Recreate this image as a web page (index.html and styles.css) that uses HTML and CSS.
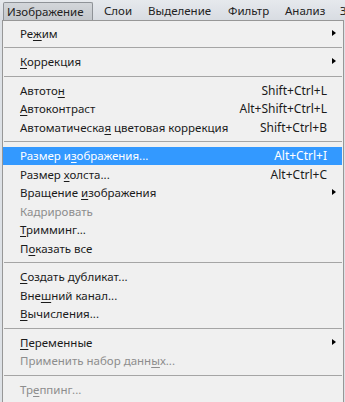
FILE: index.html
```html
<!DOCTYPE html>
<html lang="ru">
<head>
<meta charset="utf-8">
<link rel="stylesheet" href="styles.css">
</head>
<body>
<div class="menubar">
  <div class="top active">Изображение</div>
  <div class="top w-layers">Слои</div>
  <div class="top w-select">Выделение</div>
  <div class="top w-filter">Фильтр</div>
  <div class="top w-analysis">Анализ</div>
  <div class="top">З</div>
</div>
<div class="dropdown">
  <div class="item"><span class="label">Ре<u>ж</u>им</span><span class="key"></span><span class="sub"></span></div>
  <div class="sep"></div>
  <div class="item"><span class="label"><u>К</u>оррекция</span><span class="key"></span><span class="sub"></span></div>
  <div class="sep"></div>
  <div class="item"><span class="label">Автото<u>н</u></span><span class="key">Shift+Ctrl+L</span><span></span></div>
  <div class="item"><span class="label"><u>А</u>втоконтраст</span><span class="key">Alt+Shift+Ctrl+L</span><span></span></div>
  <div class="item"><span class="label">Автоматическа<u>я</u> цветовая коррекция</span><span class="key">Shift+Ctrl+B</span><span></span></div>
  <div class="sep"></div>
  <div class="item selected"><span class="label">Размер и<u>з</u>ображения...</span><span class="key">Alt+Ctrl+I</span><span></span></div>
  <div class="item"><span class="label">Размер <u>х</u>олста...</span><span class="key">Alt+Ctrl+C</span><span></span></div>
  <div class="item"><span class="label">Вращение <u>и</u>зображения</span><span class="key"></span><span class="sub"></span></div>
  <div class="item disabled"><span class="label">Кадрировать</span><span class="key"></span><span></span></div>
  <div class="item"><span class="label"><u>Т</u>римминг...</span><span class="key"></span><span></span></div>
  <div class="item"><span class="label">П<u>о</u>казать все</span><span class="key"></span><span></span></div>
  <div class="sep"></div>
  <div class="item"><span class="label"><u>С</u>оздать дубликат...</span><span class="key"></span><span></span></div>
  <div class="item"><span class="label">Вне<u>ш</u>ний канал...</span><span class="key"></span><span></span></div>
  <div class="item"><span class="label"><u>В</u>ычисления...</span><span class="key"></span><span></span></div>
  <div class="sep"></div>
  <div class="item"><span class="label"><u>П</u>еременные</span><span class="key"></span><span class="sub"></span></div>
  <div class="item disabled"><span class="label">Применить набор данн<u>ы</u>х...</span><span class="key"></span><span></span></div>
  <div class="sep"></div>
  <div class="item disabled"><span class="label">Тр<u>е</u>ппинг...</span><span class="key"></span><span></span></div>
</div>
</body>
</html>
```

FILE: styles.css
```css
html, body {
  margin: 0;
  padding: 0;
}
body {
  width: 345px;
  height: 402px;
  overflow: hidden;
  background: #dde1e6;
  font-family: "Noto Sans", "Open Sans", sans-serif;
  font-size: 11.5px;
  color: #1b1b1b;
}
.menubar {
  height: 20px;
  display: flex;
  align-items: flex-end;
  background: linear-gradient(#e6e9ed, #d8dce2);
  white-space: nowrap;
  overflow: hidden;
}
.top {
  height: 18px;
  line-height: 17px;
  box-sizing: border-box;
  flex: none;
  color: #222;
}
.top.active {
  margin-left: 3px;
  width: 90px;
  padding-left: 3px;
  background: linear-gradient(#d3d6da, #c3c7cc);
  border: 1px solid #8e9297;
  border-bottom: none;
  border-radius: 2px 2px 0 0;
}
.w-layers { margin-left: 11px; width: 44px; }
.w-select { width: 80px; }
.w-filter { width: 57px; }
.w-analysis { width: 55px; }
.dropdown {
  margin-left: 2px;
  width: 342px;
  box-sizing: border-box;
  height: 400px;
  background: #f0f0f0;
  border: 1px solid #979797;
  padding: 3px 1px 0 0;
}
.item {
  height: 18.5px;
  display: grid;
  grid-template-columns: 1fr auto 9px;
  align-items: center;
  padding: 0 6px 0 17px;
  white-space: nowrap;
}
.item u {
  text-underline-offset: 2px;
}
.key {
  text-align: right;
  font-size: 12px;
}
.sub {
  width: 9px;
  height: 7px;
  position: relative;
}
.sub::after {
  content: "";
  position: absolute;
  left: 5px;
  top: 0;
  border-left: 4px solid #000;
  border-top: 3.5px solid transparent;
  border-bottom: 3.5px solid transparent;
}
.selected {
  background: #3399ff;
  color: #fff;
}
.disabled {
  color: #8d8d8d;
}
.sep {
  height: 10px;
  display: flex;
  align-items: center;
  margin-left: 1px;
}
.sep::before {
  content: "";
  display: block;
  width: 100%;
  height: 1px;
  background: #a5a5a5;
}
```
